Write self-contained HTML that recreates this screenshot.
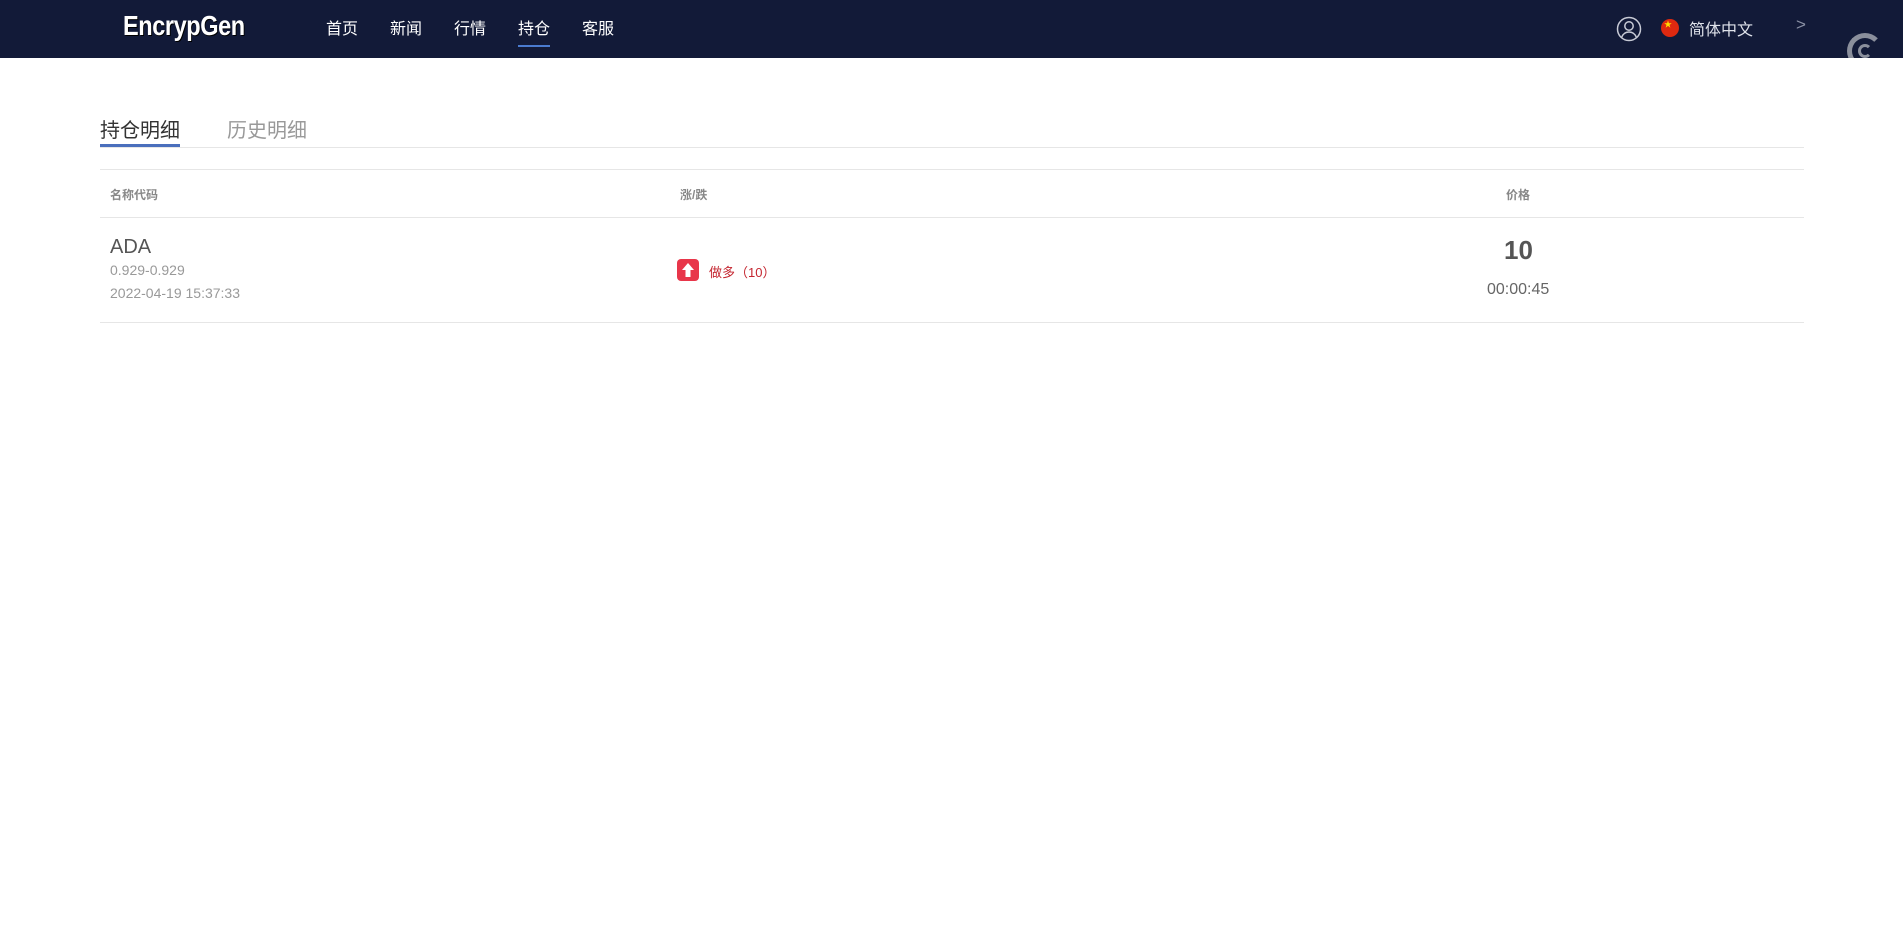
<!DOCTYPE html>
<html><head><meta charset="utf-8"><style>
*{margin:0;padding:0;box-sizing:border-box}
body{width:1903px;height:932px;background:#fff;font-family:"Liberation Sans","Noto Sans CJK SC",sans-serif;position:relative;overflow:hidden}
.a{position:absolute;white-space:nowrap}
.hd{position:absolute;left:0;top:0;width:1903px;height:58px;background:#121a38}
.nav{color:#fff;font-size:16px;top:15px}
.line{position:absolute;height:1px;background:#e6e6e6;left:100px;width:1704px}
</style></head><body>
<div class="hd"></div>
<div class="a" style="left:123px;top:10px;color:#fff;font-size:28px;font-weight:bold;font-family:'Liberation Sans Narrow','Liberation Sans',sans-serif;transform:scaleX(0.84);transform-origin:left;letter-spacing:-0.5px;text-shadow:1px 1px 0 #000">EncrypGen</div>
<div class="a nav" style="left:326px">首页</div>
<div class="a nav" style="left:390px">新闻</div>
<div class="a nav" style="left:454px">行情</div>
<div class="a nav" style="left:518px">持仓</div>
<div class="a nav" style="left:582px">客服</div>
<div class="a" style="left:518px;top:45px;width:32px;height:2px;background:#4a7bd0"></div>
<svg class="a" style="left:1616px;top:16px" width="26" height="26" viewBox="0 0 26 26" fill="none" stroke="#c8cbd6" stroke-width="1.5"><circle cx="13" cy="13" r="11.5"/><circle cx="13" cy="10" r="4.2"/><path d="M5.5 21.5c1.5-4 4.5-5.5 7.5-5.5s6 1.5 7.5 5.5"/></svg>
<div class="a" style="left:1661px;top:19px;width:18px;height:18px;border-radius:50%;background:#de2910"><span style="position:absolute;left:3px;top:0px;color:#ffde00;font-size:8px">★</span></div>
<div class="a" style="left:1689px;top:16px;color:#dfe2ea;font-size:16px">简体中文</div>
<div class="a" style="left:1796px;top:15px;color:#8a90a4;font-size:17px">&gt;</div>
<div class="a" style="left:1847px;top:33px;width:36px;height:36px;border-radius:50%;border:5px solid #8a8f9c;border-right-color:transparent;clip-path:inset(0 0 11px 0)"></div>
<div class="a" style="left:1858px;top:44px;width:14px;height:14px;border-radius:50%;border:3px solid #8a8f9c;border-right-color:transparent;clip-path:inset(0 0 0 0)"></div>
<div class="a" style="left:1840px;top:58px;width:60px;height:20px;background:#fff"></div>

<div class="a" style="left:100px;top:114px;font-size:20px;color:#333">持仓明细</div>
<div class="a" style="left:227px;top:114px;font-size:20px;color:#999">历史明细</div>
<div class="line" style="top:147px;background:#e6e6e6"></div>
<div class="a" style="left:100px;top:144px;width:80px;height:3px;background:#4a6fbc"></div>

<div class="line" style="top:169px"></div>
<div class="a" style="left:110px;top:186px;font-size:12px;color:#888;font-weight:bold">名称代码</div>
<div class="a" style="left:680px;top:186px;font-size:12px;color:#888;font-weight:bold">涨/跌</div>
<div class="a" style="left:1506px;top:186px;font-size:12px;color:#888;font-weight:bold">价格</div>
<div class="line" style="top:217px"></div>

<div class="a" style="left:110px;top:236px;font-size:20px;color:#555">ADA</div>
<div class="a" style="left:110px;top:262px;font-size:14px;color:#999">0.929-0.929</div>
<div class="a" style="left:110px;top:285px;font-size:14px;color:#999">2022-04-19 15:37:33</div>
<svg class="a" style="left:677px;top:259px" width="22" height="22" viewBox="0 0 22 22"><rect width="22" height="22" rx="4" fill="#e8364a"/><path d="M11 4l6 7h-3.5v7h-5v-7H5z" fill="#fff"/></svg>
<div class="a" style="left:709px;top:262px;font-size:13px;color:#c4252f">做多（10）</div>
<div class="a" style="left:1504px;top:235px;font-size:26px;color:#555;font-weight:bold">10</div>
<div class="a" style="left:1487px;top:281px;font-size:16px;color:#666">00:00:45</div>
<div class="line" style="top:322px"></div>
</body></html>
